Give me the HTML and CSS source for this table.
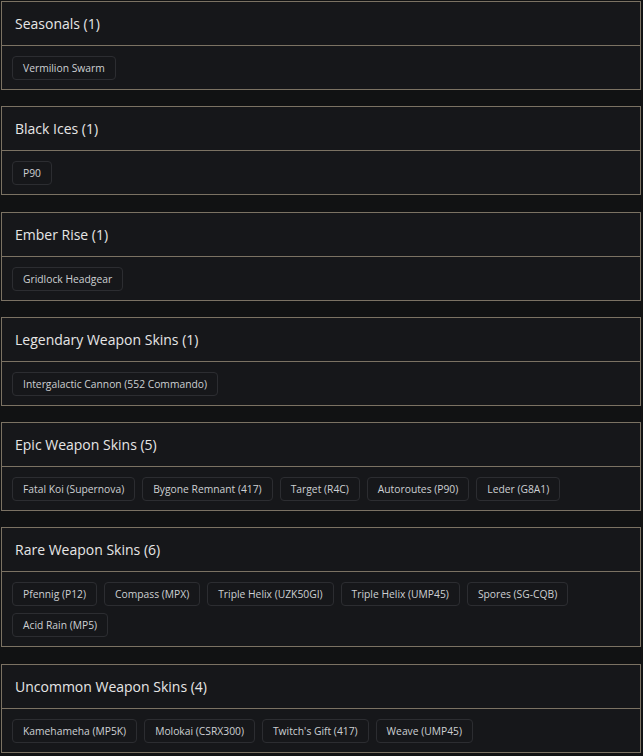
FILE: index.html
```html
<!DOCTYPE html>
<html lang="en">
<head>
<meta charset="utf-8">
<title>Collections</title>
<link rel="stylesheet" href="styles.css">
</head>
<body>
<main class="list">
  <section class="card">
    <h2 class="card-title">Seasonals (1)</h2>
    <div class="chips">
      <span class="chip">Vermilion Swarm</span>
    </div>
  </section>
  <section class="card">
    <h2 class="card-title">Black Ices (1)</h2>
    <div class="chips">
      <span class="chip">P90</span>
    </div>
  </section>
  <section class="card">
    <h2 class="card-title">Ember Rise (1)</h2>
    <div class="chips">
      <span class="chip">Gridlock Headgear</span>
    </div>
  </section>
  <section class="card">
    <h2 class="card-title">Legendary Weapon Skins (1)</h2>
    <div class="chips">
      <span class="chip">Intergalactic Cannon (552 Commando)</span>
    </div>
  </section>
  <section class="card">
    <h2 class="card-title">Epic Weapon Skins (5)</h2>
    <div class="chips">
      <span class="chip">Fatal Koi (Supernova)</span>
      <span class="chip">Bygone Remnant (417)</span>
      <span class="chip">Target (R4C)</span>
      <span class="chip">Autoroutes (P90)</span>
      <span class="chip">Leder (G8A1)</span>
    </div>
  </section>
  <section class="card">
    <h2 class="card-title">Rare Weapon Skins (6)</h2>
    <div class="chips">
      <span class="chip">Pfennig (P12)</span>
      <span class="chip">Compass (MPX)</span>
      <span class="chip">Triple Helix (UZK50GI)</span>
      <span class="chip">Triple Helix (UMP45)</span>
      <span class="chip">Spores (SG-CQB)</span>
      <span class="chip">Acid Rain (MP5)</span>
    </div>
  </section>
  <section class="card">
    <h2 class="card-title">Uncommon Weapon Skins (4)</h2>
    <div class="chips">
      <span class="chip">Kamehameha (MP5K)</span>
      <span class="chip">Molokai (CSRX300)</span>
      <span class="chip">Twitch's Gift (417)</span>
      <span class="chip">Weave (UMP45)</span>
    </div>
  </section>
</main>
</body>
</html>
```
FILE: styles.css
```css
html, body {
  margin: 0;
  padding: 0;
  background: #111213;
}
body {
  font-family: "Open Sans", "Noto Sans", sans-serif;
  color: #e3e3e3;
}
.list {
  display: flex;
  flex-direction: column;
  gap: 16.3px;
  padding: 1px 2px 0 1px;
}
.card {
  background: #16171a;
  border: 1px solid #7b7263;
}
.card-title {
  margin: 0;
  height: 43px;
  display: flex;
  align-items: center;
  padding: 0 13px;
  font-size: 14px;
  font-weight: 500;
  color: #e6e6e6;
  border-bottom: 1px solid #7b7263;
}
.chips {
  display: flex;
  flex-wrap: wrap;
  gap: 7px 7px;
  padding: 10px 10px 9px;
}
.chip {
  display: inline-flex;
  align-items: center;
  height: 24px;
  box-sizing: border-box;
  padding: 0 10px;
  border: 1px solid #2c2d31;
  border-radius: 4px;
  font-size: 10.3px;
  color: #cdd0d3;
}
```
